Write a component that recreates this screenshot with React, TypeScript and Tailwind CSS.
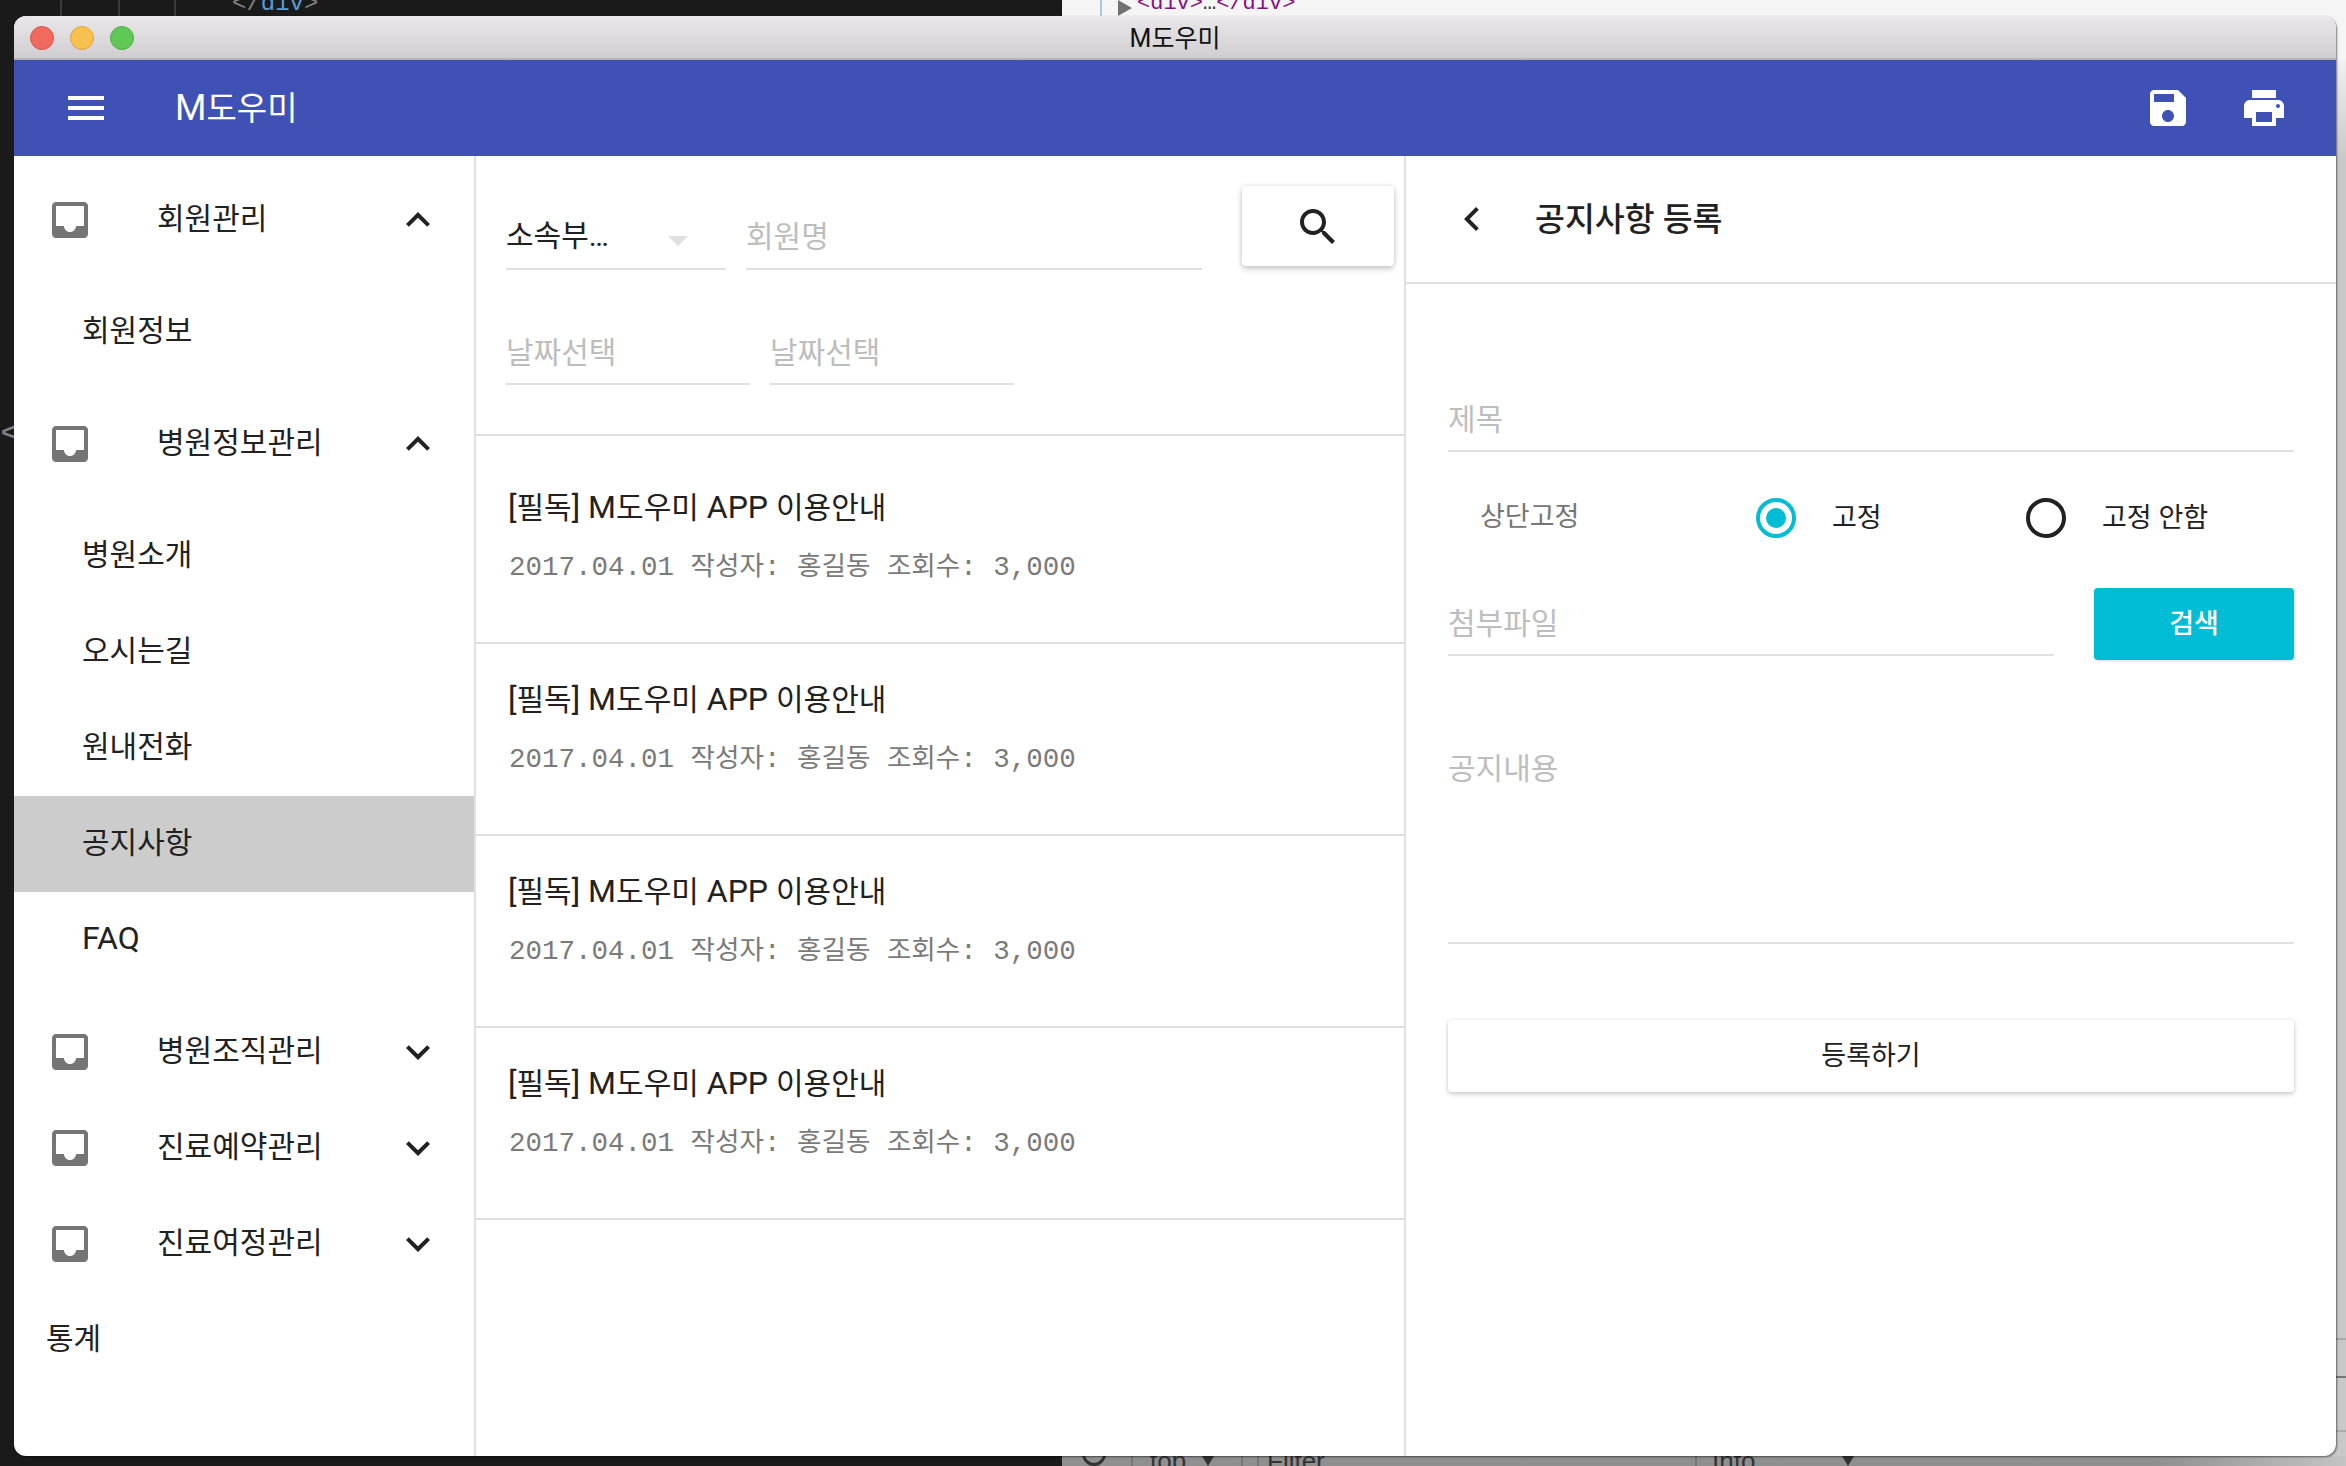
import React from 'react';

const PATHS = {
  menu: 'M3 18h18v-2H3v2zm0-5h18v-2H3v2zm0-7v2h18V6H3z',
  save: 'M17 3H5c-1.11 0-2 .9-2 2v14c0 1.1.89 2 2 2h14c1.1 0 2-.9 2-2V7l-4-4zm-5 16c-1.66 0-3-1.34-3-3s1.34-3 3-3 3 1.34 3 3-1.34 3-3 3zm3-10H5V5h10v4z',
  print: 'M19 8H5c-1.66 0-3 1.34-3 3v6h4v4h12v-4h4v-6c0-1.66-1.34-3-3-3zm-3 11H8v-5h8v5zm3-7c-.55 0-1-.45-1-1s.45-1 1-1 1 .45 1 1-.45 1-1 1zm-1-9H6v4h12V3z',
  inbox: 'M19 3H4.99c-1.11 0-1.98.89-1.98 2L3 19c0 1.1.88 2 1.99 2H19c1.1 0 2-.9 2-2V5c0-1.11-.9-2-2-2zm0 12h-4c0 1.66-1.35 3-3 3s-3-1.34-3-3H4.99V5H19v10z',
  less: 'M12 8l-6 6 1.41 1.41L12 10.83l4.59 4.58L18 14z',
  more: 'M16.59 8.59L12 13.17 7.41 8.59 6 10l6 6 6-6z',
  search: 'M15.5 14h-.79l-.28-.27C15.41 12.59 16 11.11 16 9.5 16 5.91 13.09 3 9.5 3S3 5.91 3 9.5 5.91 16 9.5 16c1.61 0 3.09-.59 4.23-1.57l.27.28v.79l5 4.99L20.49 19l-4.99-5zm-6 0C7.01 14 5 11.99 5 9.5S7.01 5 9.5 5 14 7.01 14 9.5 11.99 14 9.5 14z',
  back: 'M15.41 7.41L14 6l-6 6 6 6 1.41-1.41L10.83 12z',
};

function Icon({ name, className }: { name: keyof typeof PATHS; className?: string }) {
  return (
    <svg viewBox="0 0 24 24" className={`h-12 w-12 shrink-0 fill-current ${className ?? ''}`}>
      <path d={PATHS[name]} />
    </svg>
  );
}

function NavGroup({ label, open }: { label: string; open: boolean }) {
  return (
    <div className="flex h-24 items-center pl-8 pr-8">
      <Icon name="inbox" className="text-[#757575]" />
      <span className="ml-[63px] flex-1 -translate-y-0.5 text-[30px] text-[#212121]">{label}</span>
      <Icon name={open ? 'less' : 'more'} className="text-[#212121]" />
    </div>
  );
}

function NavItem({ label, active, latin }: { label: string; active?: boolean; latin?: boolean }) {
  return (
    <div className={`flex h-24 items-center pl-[68px] ${active ? 'bg-[#cccccc]' : ''}`}>
      <span className={`-translate-y-0.5 text-[#212121] ${latin ? 'text-[32px]' : 'text-[30px]'}`}>{label}</span>
    </div>
  );
}

function Sidebar() {
  return (
    <aside className="w-[462px] shrink-0 border-r-2 border-[#e0e0e0] pt-4">
      <NavGroup label="회원관리" open />
      <div className="py-4">
        <NavItem label="회원정보" />
      </div>
      <NavGroup label="병원정보관리" open />
      <div className="py-4">
        <NavItem label="병원소개" />
        <NavItem label="오시는길" />
        <NavItem label="원내전화" />
        <NavItem label="공지사항" active />
        <NavItem label="FAQ" latin />
      </div>
      <NavGroup label="병원조직관리" open={false} />
      <NavGroup label="진료예약관리" open={false} />
      <NavGroup label="진료여정관리" open={false} />
      <div className="flex h-24 items-center pl-8">
        <span className="-translate-y-0.5 text-[30px] text-[#212121]">통계</span>
      </div>
    </aside>
  );
}

function Field({ placeholder, className }: { placeholder: string; className: string }) {
  return (
    <div className={`flex h-16 items-center border-b-2 border-[#e0e0e0] text-[30px] text-[#bdbdbd] ${className}`}>
      {placeholder}
    </div>
  );
}

function NoticeRow() {
  return (
    <div className="h-[192px] border-b-2 border-[#e0e0e0] pl-8 pt-[35px]">
      <div className="h-10 whitespace-pre text-[30px] leading-10 text-[#212121]">
        <span className="text-[32px]">[</span>필독<span className="text-[32px]">] M</span>도우미
        <span className="text-[32px]"> APP </span>이용안내
      </div>
      <div className="mt-[21px] h-10 whitespace-pre pl-px text-[27.5px] leading-10 text-[#7a7a7a] [font-family:'Liberation_Mono','Noto_Sans_CJK_KR',monospace]">
        2017.04.01 <span className="text-[26.6px]">작성자</span>: <span className="text-[26.6px]">홍길동</span>{' '}
        <span className="text-[26.6px]">조회수</span>: 3,000
      </div>
    </div>
  );
}

function NoticeList() {
  return (
    <section className="w-[930px] shrink-0 border-r-2 border-[#e0e0e0]">
      <div className="h-[280px] border-b-2 border-[#e0e0e0] pl-[30px] pt-[30px]">
        <div className="flex h-[84px] items-end">
          <div className="relative flex h-16 w-[220px] items-center border-b-2 border-[#e0e0e0] pb-1 text-[30px] text-[#212121]">
            소속부…
            <div className="absolute left-[162px] top-[30px] h-0 w-0 border-x-[10px] border-t-[10px] border-x-transparent border-t-[#e0e0e0]" />
          </div>
          <Field placeholder="회원명" className="ml-5 w-[456px] pb-0.5" />
          <button className="ml-10 flex h-20 w-[152px] items-center justify-center self-start rounded bg-white pt-0.5 text-[#212121] shadow-[0_3px_6px_rgba(0,0,0,0.2),0_0_4px_rgba(0,0,0,0.1)]">
            <Icon name="search" />
          </button>
        </div>
        <div className="mt-[51px] flex gap-5">
          <Field placeholder="날짜선택" className="w-[244px]" />
          <Field placeholder="날짜선택" className="w-[244px]" />
        </div>
      </div>
      <div className="pt-4">
        <NoticeRow />
        <NoticeRow />
        <NoticeRow />
        <NoticeRow />
      </div>
    </section>
  );
}

function Radio({ checked, label }: { checked?: boolean; label: string }) {
  return (
    <div className={`flex items-center gap-9 ${checked ? 'w-[270px]' : ''}`}>
      <div className={`flex h-10 w-10 items-center justify-center rounded-full border-4 ${checked ? 'border-[#00bcd4]' : 'border-[#212121]'}`}>
        {checked && <div className="h-5 w-5 rounded-full bg-[#00bcd4]" />}
      </div>
      <span className="text-[27px] text-[#212121]">{label}</span>
    </div>
  );
}

function NoticeForm() {
  return (
    <section className="min-w-0 flex-1">
      <div className="flex h-32 items-center border-b-2 border-[#e0e0e0] pl-[42px]">
        <Icon name="back" className="text-[#212121]" />
        <h2 className="ml-[39px] translate-y-px text-[32.5px] font-medium text-[#212121]">공지사항 등록</h2>
      </div>
      <div className="px-[42px] pt-[104px]">
        <Field placeholder="제목" className="w-full" />
        <div className="mt-[26px] flex h-20 items-center">
          <span className="w-[308px] -translate-y-px pl-8 text-[27px] text-[#757575]">상단고정</span>
          <Radio checked label="고정" />
          <Radio label="고정 안함" />
        </div>
        <div className="mt-[30px] flex items-start justify-between">
          <Field placeholder="첨부파일" className="mt-1 w-[606px]" />
          <button className="h-[72px] w-[200px] rounded bg-[#00bcd4] text-[27px] font-medium text-white shadow-[0_1px_3px_rgba(0,0,0,0.15)]">
            검색
          </button>
        </div>
        <div className="mt-[75px] h-[209px] border-b-2 border-[#e0e0e0]">
          <div className="flex h-16 items-center pt-0.5 text-[30px] text-[#bdbdbd]">공지내용</div>
        </div>
        <button className="mt-[76px] h-[72px] w-full rounded bg-white text-[27px] text-[#212121] shadow-[0_2px_5px_rgba(0,0,0,0.2),0_0_3px_rgba(0,0,0,0.08)]">
          등록하기
        </button>
      </div>
    </section>
  );
}

function TitleBar() {
  return (
    <div className="relative flex h-11 shrink-0 items-center justify-center border-b-2 border-[#b4b3b5] bg-gradient-to-b from-[#e9e7e9] to-[#d0ced0]">
      <div className="absolute left-4 top-[10px] flex gap-4">
        <div className="h-6 w-6 rounded-full border border-[#e0524a] bg-[#f1695f]" />
        <div className="h-6 w-6 rounded-full border border-[#e0a23c] bg-[#f8c04e]" />
        <div className="h-6 w-6 rounded-full border border-[#4fb045] bg-[#60c854]" />
      </div>
      <span className="translate-y-0.5 text-[25px] text-[#111111]">M도우미</span>
    </div>
  );
}

function AppBar() {
  return (
    <header className="flex h-24 shrink-0 items-center bg-[#3f51b5] px-12 text-white">
      <Icon name="menu" />
      <h1 className="ml-[65px] flex-1 text-[33px]">
        <span className="text-[36px]">M</span>도우미
      </h1>
      <Icon name="save" />
      <Icon name="print" className="ml-12" />
    </header>
  );
}

function Backdrop() {
  return (
    <div className="flex h-full w-full">
      <div className="relative w-[1062px] shrink-0 overflow-hidden bg-[#1a1a1a] [font-family:'Liberation_Mono',monospace]">
        <div className="absolute left-[60px] top-0 h-4 w-0.5 bg-[#3a3a3a]" />
        <div className="absolute left-[118px] top-0 h-4 w-0.5 bg-[#3a3a3a]" />
        <div className="absolute left-[174px] top-0 h-4 w-0.5 bg-[#3a3a3a]" />
        <div className="absolute left-[232px] top-[-10px] text-[24px] leading-7 text-[#808080]">
          &lt;/<span className="text-[#569cd6]">div</span>&gt;
        </div>
        <div className="absolute left-[1px] top-[418px] text-[24px] font-bold leading-8 text-[#808080]">&lt;</div>
      </div>
      <div className="flex min-w-0 flex-1 flex-col">
        <div className="relative h-[60px] bg-[#f5f5f5] [font-family:'Liberation_Mono',monospace]">
          <div className="absolute left-[38px] top-0 h-4 w-0.5 bg-[#a8c7ea]" />
          <div className="absolute left-[56px] top-0 h-0 w-0 border-y-[8px] border-l-[14px] border-y-transparent border-l-[#727272]" />
          <div className="absolute left-[75px] top-[-10px] text-[22px] leading-7 text-[#881280]">
            &lt;div&gt;<span className="text-[#333333]">…</span>&lt;/div&gt;
          </div>
        </div>
        <div className="relative flex-1 bg-[linear-gradient(#f0f0f0,#c8c8c8_100px,#c8c8c8)]">
          <div className="absolute bottom-[116px] right-0 h-0.5 w-[10px] bg-[#aaaaaa]" />
          <div className="absolute bottom-[78px] right-0 h-0.5 w-[10px] bg-[#777777]" />
          <div className="absolute bottom-6 right-0 h-0.5 w-[10px] bg-[#aaaaaa]" />
        </div>
        <div className="relative h-[10px] overflow-hidden bg-gradient-to-r from-[#8f8f8f] from-85% to-[#c4c4c4] text-[26px] leading-7 text-[#333333] [font-family:'Liberation_Sans',sans-serif]">
          <div className="absolute left-[20px] top-[-14px] h-6 w-6 rounded-full border-[3px] border-[#333333]" />
          <div className="absolute left-[69px] top-0 h-[10px] w-0.5 bg-[#777777]" />
          <span className="absolute left-[88px] top-[-9px]">top</span>
          <div className="absolute left-[140px] top-0 h-0 w-0 border-x-[6px] border-t-[10px] border-x-transparent border-t-[#333333]" />
          <div className="absolute left-[179px] top-0 h-[10px] w-0.5 bg-[#777777]" />
          <div className="absolute left-[195px] top-0 h-[10px] w-0.5 bg-[#777777]" />
          <span className="absolute left-[205px] top-[-9px]">Filter</span>
          <div className="absolute left-[633px] top-0 h-[10px] w-0.5 bg-[#777777]" />
          <span className="absolute left-[650px] top-[-9px]">Info</span>
          <div className="absolute left-[780px] top-0 h-0 w-0 border-x-[6px] border-t-[10px] border-x-transparent border-t-[#333333]" />
        </div>
      </div>
    </div>
  );
}

export default function App() {
  return (
    <div className="relative h-[1466px] w-[2346px] overflow-hidden [font-family:Roboto,'Noto_Sans_CJK_KR',sans-serif]">
      <Backdrop />
      <div className="absolute left-[14px] top-4 flex h-[1440px] w-[2322px] flex-col overflow-hidden rounded-xl bg-white shadow-[1px_1px_2px_rgba(0,0,0,0.5)]">
        <TitleBar />
        <AppBar />
        <div className="flex min-h-0 flex-1">
          <Sidebar />
          <NoticeList />
          <NoticeForm />
        </div>
      </div>
    </div>
  );
}
